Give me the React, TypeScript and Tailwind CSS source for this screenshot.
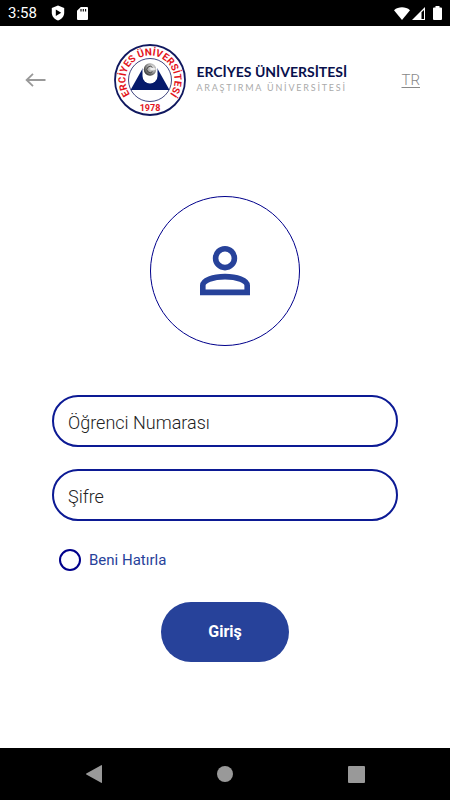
import { useState } from "react";

function StatusBar() {
  return (
    <div className="flex h-[26px] items-center justify-between bg-black px-2 text-white">
      <div className="flex items-center">
        <span className="w-[43px] text-[15px] leading-5">3:58</span>
        <svg aria-hidden="true" viewBox="0 0 14 16" className="h-4 w-[14px]">
          <path d="M7 .5 13.2 3v4.8C13.2 11.400 10.600 14.500 7 15.500 3.400 14.500.8 11.400.8 7.800V3z" fill="#fff" />
          <path d="M4.800 4.600v6.400L10.200 7.800z" fill="#000" />
        </svg>
        <svg aria-hidden="true" viewBox="0 0 11 13" className="ml-3 h-[13px] w-[11px]">
          <path d="M3.800 0H10a1 1 0 0 1 1 1v11a1 1 0 0 1-1 1H1a1 1 0 0 1-1-1V3.800z" fill="#fff" />
          <path d="M4 2v2.500M6.300 2v2.500M8.600 2v2.500" stroke="#000" strokeWidth="1.100" />
        </svg>
      </div>
      <div className="flex items-center">
        <svg aria-hidden="true" viewBox="0 0 16 13" className="h-[13px] w-4">
          <path d="M0 3.200C4.500-.6 11.500-.6 16 3.200L8 13z" fill="#fff" />
        </svg>
        <svg aria-hidden="true" viewBox="0 0 13 13" className="ml-[2px] h-[13px] w-[13px]">
          <path d="M0 13 13 0v13z" fill="#fff" />
          <path d="M9.500 5.200V12H12V3z" fill="#000" />
        </svg>
        <svg aria-hidden="true" viewBox="0 0 9 14" className="ml-2 h-[14px] w-[9px]">
          <path d="M2.500 0h4v1.500H8a1 1 0 0 1 1 1V13a1 1 0 0 1-1 1H1a1 1 0 0 1-1-1V2.500a1 1 0 0 1 1-1h1.500z" fill="#fff" />
        </svg>
      </div>
    </div>
  );
}

function UniversitySeal() {
  return (
    <svg viewBox="0 0 72 72" className="h-[72px] w-[72px] shrink-0" role="img" aria-label="Erciyes Üniversitesi 1978">
      <defs>
        <path id="seal-arc" d="M18.680 53.320A24.500 24.500 0 1 1 53.320 53.320" />
        <radialGradient id="seal-ball" cx="0.650" cy="0.350" r="0.700">
          <stop offset="0" stopColor="#eee" />
          <stop offset="0.500" stopColor="#aaa" />
          <stop offset="1" stopColor="#333" />
        </radialGradient>
      </defs>
      <circle cx="36" cy="36" r="35" fill="#fff" stroke="#10185f" strokeWidth="1.800" />
      <circle cx="36" cy="36" r="21.500" fill="#fff" stroke="#10185f" strokeWidth="0.800" />
      <path d="M30 22 16.500 46H55.500L42 22z" fill="#061a6b" />
      <path d="M28.500 21.500h15V32a7.500 7.500 0 0 1-15 0z" fill="#fff" />
      <circle cx="36" cy="25.500" r="6.200" fill="url(#seal-ball)" />
      <path d="M38.500 23.400a3.200 3.200 0 1 0 0 4.200" fill="none" stroke="#444" strokeWidth="1" />
      <path d="M36.500 25h5" stroke="#fff" strokeWidth="1.300" />
      <text fill="#e3141c" fontSize="10" fontWeight="700" className="font-[Roboto,sans-serif]">
        <textPath href="#seal-arc" startOffset="50%" textAnchor="middle">
          ERCİYES ÜNİVERSİTESİ
        </textPath>
      </text>
      <text
        x="36"
        y="67"
        textAnchor="middle"
        fill="#e3141c"
        fontSize="9"
        fontWeight="700"
        className="font-[Roboto,sans-serif]"
      >
        1978
      </text>
    </svg>
  );
}

function Header() {
  return (
    <header className="flex items-center justify-between pb-20 pl-6 pr-[30px] pt-[18px]">
      <button type="button" aria-label="Geri" className="flex h-9 w-9 items-center text-[#999]">
        <svg aria-hidden="true" viewBox="0 0 22 16" className="h-4 w-[22px]" fill="none" stroke="currentColor" strokeWidth="1.800">
          <path d="M21.500 8H3M9 1.800 2.600 8 9 14.200" />
        </svg>
      </button>
      <div className="flex items-center gap-[10px]">
        <UniversitySeal />
        <div className="whitespace-nowrap font-[Lato,sans-serif]">
          <p className="text-[14px] font-bold leading-4 text-[#08104d]">ERCİYES ÜNİVERSİTESİ</p>
          <p className="text-[9px] leading-4 tracking-[0.2em] text-[#aaa]">ARAŞTIRMA ÜNİVERSİTESİ</p>
        </div>
      </div>
      <a href="#tr" className="text-[15px] font-light text-[#888] underline underline-offset-2">
        TR
      </a>
    </header>
  );
}

const fieldClass =
  "block h-[52px] w-full rounded-full border-2 border-[#0c1a94] bg-white px-[14px] pt-[3px] text-[18px] font-light text-[#222] outline-none placeholder:text-[#222] placeholder:opacity-100";

function LoginForm() {
  const [studentNumber, setStudentNumber] = useState("");
  const [password, setPassword] = useState("");
  const [remember, setRemember] = useState(false);

  return (
    <form className="mt-[49px] flex w-full flex-col px-[52px]" onSubmit={(e) => e.preventDefault()}>
      <input
        type="text"
        aria-label="Öğrenci Numarası"
        placeholder="Öğrenci Numarası"
        value={studentNumber}
        onChange={(e) => setStudentNumber(e.target.value)}
        className={fieldClass}
      />
      <input
        type="password"
        aria-label="Şifre"
        placeholder="Şifre"
        value={password}
        onChange={(e) => setPassword(e.target.value)}
        className={`mt-[22px] ${fieldClass}`}
      />
      <label className="ml-[7px] mt-7 flex items-center gap-2 self-start text-[15px] leading-[22px] text-[#27429a]">
        <input
          type="checkbox"
          checked={remember}
          onChange={(e) => setRemember(e.target.checked)}
          className="h-[22px] w-[22px] appearance-none rounded-full border-2 border-[#00008b] checked:bg-[#27429a]"
        />
        Beni Hatırla
      </label>
      <button
        type="submit"
        className="mt-[31px] h-[60px] w-32 self-center rounded-full bg-[#27429a] text-[16px] font-bold text-white"
      >
        Giriş
      </button>
    </form>
  );
}

function NavigationBar() {
  return (
    <nav className="grid h-[52px] grid-cols-3 items-center justify-items-center bg-black px-7 text-[#999]">
      <button type="button" aria-label="Back">
        <svg aria-hidden="true" viewBox="0 0 16 18" className="h-[18px] w-4" fill="currentColor">
          <path d="M16 .5v17a.5.5 0 0 1-.8.3L.3 9.400a.5.5 0 0 1 0-.8L15.200.2a.5.5 0 0 1 .8.3z" />
        </svg>
      </button>
      <button type="button" aria-label="Home" className="h-4 w-4 rounded-full bg-[#999]" />
      <button type="button" aria-label="Recent apps" className="h-[17px] w-[17px] rounded-[1px] bg-[#999]" />
    </nav>
  );
}

export default function App() {
  return (
    <div className="flex min-h-screen flex-col bg-white font-[Roboto,sans-serif]">
      <StatusBar />
      <Header />
      <main className="flex flex-1 flex-col items-center">
        <div className="flex h-[150px] w-[150px] items-center justify-center rounded-full border border-[#00008b]">
          <svg
            aria-hidden="true"
            viewBox="0 0 50 50"
            className="h-[50px] w-[50px]"
            fill="none"
            stroke="#27429a"
            strokeWidth="5.600"
          >
            <circle cx="25" cy="12.200" r="9.400" />
            <path d="M2.800 46.400V39.500C2.800 34.500 13 30.600 25 30.600S47.200 34.500 47.200 39.500V46.400z" />
          </svg>
        </div>
        <LoginForm />
      </main>
      <NavigationBar />
    </div>
  );
}
